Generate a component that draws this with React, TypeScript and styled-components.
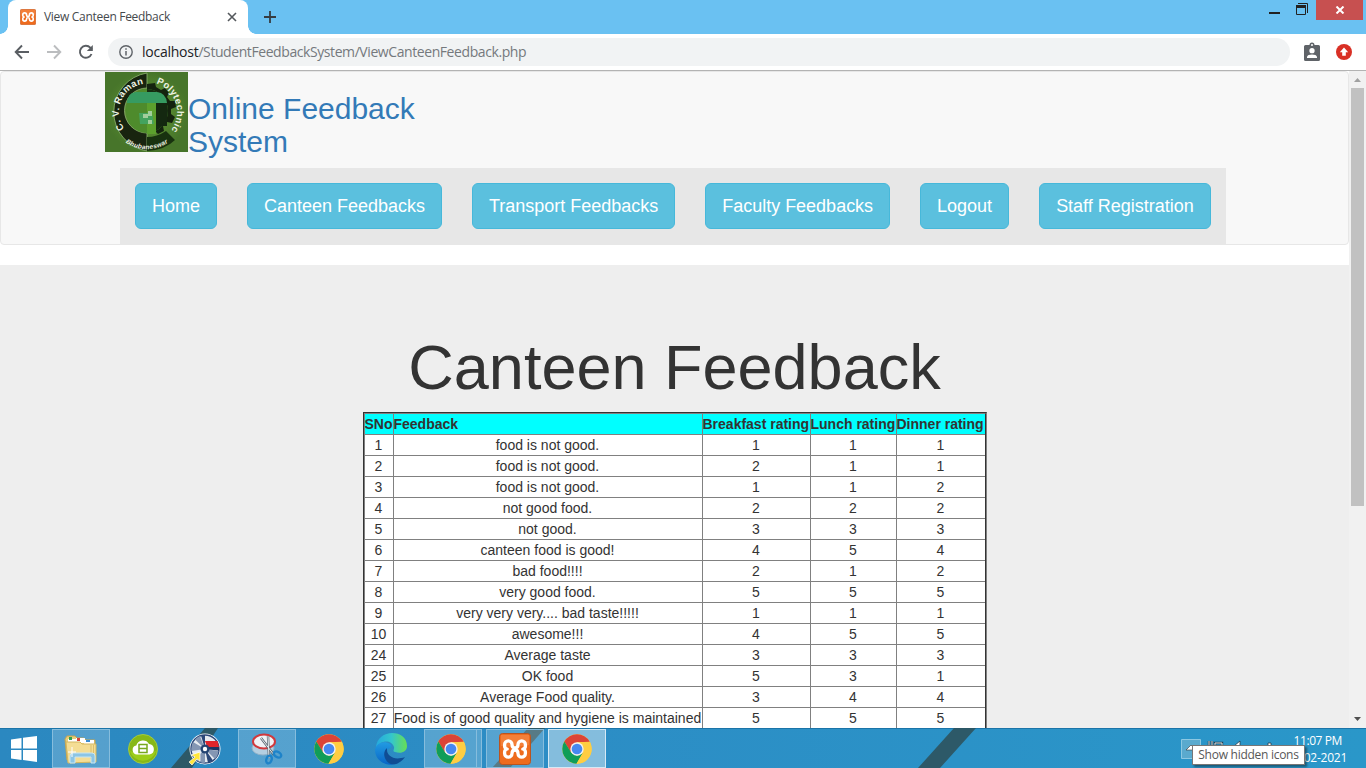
import React from "react";
import styled, { createGlobalStyle } from "styled-components";

const GlobalStyle = createGlobalStyle`
  *, *::before, *::after { box-sizing: border-box; }
  html, body, #root { margin: 0; padding: 0; height: 100%; }
  body { overflow: hidden; background: #fff; color: #333;
    font-family: "Liberation Sans", Arial, sans-serif; font-size: 14px; line-height: 20px; }
  svg { display: block; flex: none; }
`;

const ui = `"Open Sans", "Noto Sans", sans-serif`;

const Desktop = styled.div`
  width: 1366px;
  height: 768px;
  display: flex;
  flex-direction: column;
  overflow: hidden;
`;

/* browser frame */
const TabStrip = styled.header`
  height: 34px;
  flex: none;
  display: flex;
  align-items: flex-end;
  justify-content: space-between;
  background: #6ac1f2;
`;
const TabGroup = styled.div`
  display: flex;
  align-items: flex-end;
  height: 34px;
`;
const TabCurve = styled.div<{ $side: "left" | "right" }>`
  width: 8px;
  height: 8px;
  background: radial-gradient(circle at ${(p) => (p.$side === "left" ? "0 0" : "100% 0")}, transparent 7.5px, #fff 8px);
`;
const Tab = styled.div`
  width: 240px;
  height: 34px;
  padding: 0 10px 0 12px;
  display: flex;
  align-items: center;
  gap: 8px;
  background: #fff;
  border-radius: 8px 8px 0 0;
`;
const TabTitle = styled.span`
  flex: 1;
  font: 12px/16px ${ui};
  letter-spacing: -0.3px;
  color: #45494d;
  white-space: nowrap;
`;
const NewTab = styled.div`
  height: 34px;
  padding-left: 8px;
  display: flex;
  align-items: center;
`;
const WindowButtons = styled.div`
  display: flex;
  align-self: flex-start;
  height: 20px;
`;
const CloseButton = styled.div`
  width: 47px;
  height: 20px;
  margin-right: 3px;
  display: flex;
  align-items: center;
  justify-content: center;
  background: #c75050;
`;
const Toolbar = styled.div`
  height: 37px;
  flex: none;
  display: flex;
  align-items: center;
  padding: 0 14px;
  background: #fff;
  border-bottom: 1px solid #b3b3b3;
`;
const NavIcons = styled.div`
  width: 94px;
  display: flex;
  gap: 16px;
`;
const AddressBar = styled.div`
  width: 1182px;
  height: 28px;
  padding-left: 11px;
  display: flex;
  align-items: center;
  gap: 9px;
  border-radius: 14px;
  background: #f1f3f4;
`;
const Address = styled.span`
  font: 14px/20px ${ui};
  letter-spacing: -0.42px;
  color: #75797d;
  white-space: nowrap;
  b { font-weight: 400; letter-spacing: -0.25px; color: #202124; }
`;
const ToolbarActions = styled.div`
  margin-left: 14px;
  display: flex;
  align-items: center;
  gap: 16px;
`;

/* page */
const Viewport = styled.div`
  flex: 1;
  min-height: 0;
  display: flex;
  background: #fff;
`;
const Page = styled.main`
  width: 1349px;
  height: 100%;
  overflow: hidden;
`;
const Navbar = styled.nav`
  height: 174px;
  margin-bottom: 20px;
  padding-left: 104px;
  background: #f8f8f8;
  border: 1px solid #e7e7e7;
  border-radius: 4px;
`;
const Brand = styled.div`
  display: flex;
  height: 96px;
  color: #337ab7;
`;
const BrandName = styled.h2`
  width: 270px;
  margin: 20px 0 0;
  font-size: 30px;
  font-weight: 400;
  line-height: 33px;
`;
const Menu = styled.div`
  display: flex;
  gap: 30px;
  width: 1106px;
  height: 76px;
  margin-left: 15px;
  padding: 15px;
  background: #e7e7e7;
`;
const MenuButton = styled.button`
  height: 46px;
  padding: 0 16px;
  border: 1px solid #46b8da;
  border-radius: 6px;
  background: #5bc0de;
  color: #fff;
  font: 18px/24px "Liberation Sans", Arial, sans-serif;
  letter-spacing: -0.009px;
  white-space: nowrap;
`;
const Jumbotron = styled.section`
  padding-top: 68px;
  height: 600px;
  background: #eee;
  display: flex;
  flex-direction: column;
  align-items: center;
`;
const Title = styled.h1`
  margin: 0 0 10px;
  font-size: 63px;
  font-weight: 400;
  line-height: 69px;
`;
const Table = styled.div`
  width: 624px;
  border: 1px solid #333;
  border-right-color: #808080;
`;
const Row = styled.div<{ $head?: boolean }>`
  display: grid;
  grid-template-columns: 29px 309px 108px 86px 88px;
  height: 21px;
  border-left: 1px solid #808080;
  border-right: 1px solid #333;
  background: ${(p) => (p.$head ? "#0ff" : "#fff")};
  font-weight: ${(p) => (p.$head ? 700 : 400)};
  text-align: ${(p) => (p.$head ? "left" : "center")};
  &:first-child { height: 22px; border-top: 1px solid #808080; }
`;
const Cell = styled.div`
  border: solid #808080;
  border-width: 0 1px 1px 0;
  white-space: nowrap;
  line-height: 20px;
  &:last-child { border-right: 0; }
`;
const Scrollbar = styled.div`
  width: 17px;
  display: flex;
  flex-direction: column;
  align-items: center;
  background: #f1f1f1;
`;
const ScrollThumb = styled.div`
  width: 13px;
  height: 418px;
  margin-bottom: auto;
  background: #c1c1c1;
`;

/* taskbar */
const Taskbar = styled.footer`
  position: relative;
  height: 40px;
  flex: none;
  display: flex;
  gap: 4px;
  background: linear-gradient(#1b74a8 0 1px, transparent 1px), linear-gradient(90deg, #2b88c0, #2c8dc5 40%, #2a97c9);
`;
const Streaks = styled.svg`
  position: absolute;
  inset: 0;
`;
const Slot = styled.div<{ $state?: "open" | "active"; $w?: number }>`
  position: relative;
  width: ${(p) => p.$w ?? 58}px;
  height: 39px;
  margin-top: 1px;
  display: flex;
  align-items: center;
  justify-content: center;
  border: 1px solid ${(p) => (p.$state === "active" ? "#d5e9f5" : p.$state ? "#86bddd" : "transparent")};
  background: ${(p) => (p.$state === "active" ? "rgba(255,255,255,.42)" : p.$state ? "rgba(255,255,255,.2)" : "none")};
`;
const StackedGroup = styled.div`
  display: flex;
  width: 58px;
`;
const StackEdge = styled.div`
  width: 5px;
  height: 39px;
  margin-top: 1px;
  border: 1px solid #86bddd;
  border-left: 0;
  background: rgba(255, 255, 255, 0.2);
  position: relative;
`;
const Tray = styled.div`
  position: relative;
  margin-left: auto;
  width: 186px;
  display: flex;
`;
const Clock = styled.div`
  width: 60px;
  margin-left: -3px;
  padding-top: 4px;
  display: flex;
  flex-direction: column;
  align-items: flex-end;
  font: 12px/17px ${ui};
  color: #fff;
  white-space: nowrap;
`;
const Time = styled.span`
  margin-right: 5px;
  letter-spacing: -0.4px;
`;
const DateText = styled.span`
  letter-spacing: -0.25px;
`;
const Tooltip = styled.div`
  position: absolute;
  left: 12px;
  top: 17px;
  width: 113px;
  height: 20px;
  border: 1px solid #767676;
  background: #fff;
  box-shadow: 2px 2px 2px rgba(0, 0, 0, 0.4);
  color: #575757;
  font: 12px/18px ${ui};
  letter-spacing: -0.27px;
  text-align: center;
  white-space: nowrap;
`;

const Xampp = ({ size }: { size: number }) => (
  <svg width={size} height={size} viewBox="0 0 32 32">
    <rect x="0.5" y="0.5" width="31" height="31" rx="3" fill="#ee6b1d" stroke="#b85420" />
    <path d="M2 2h28v10Q16 15 2 13z" fill="#f68a46" opacity=".65" />
    <path
      d="M13 11.500a3.700 3.700 0 0 0-7.400 0V13q0 2.500 2.600 3-2.600.5-2.600 3v1.500a3.700 3.700 0 0 0 7.400 0q0-3.500 3-3.500t3 3.500a3.700 3.700 0 0 0 7.400 0V19q0-2.500-2.600-3 2.600-.5 2.600-3v-1.500a3.700 3.700 0 0 0-7.400 0q0 3.500-3 3.500t-3-3.500z"
      fill="none" stroke="#fff" strokeWidth="3.300" strokeLinejoin="round"
    />
  </svg>
);

const Chrome = () => (
  <svg width="30" height="30" viewBox="0 0 30 30">
    <circle cx="15" cy="15" r="14.700" fill="#ffcd42" />
    <path d="M2.300 7.600A14.700 14.700 0 0 1 27.700 7.700L15 8.300 8.800 18.300z" fill="#dc4437" />
    <path d="M2.300 7.600A14.700 14.700 0 0 0 14.500 29.700L21 18.700 15 21.700 9.200 18.400z" fill="#109d58" />
    <path d="M14.500 29.700A14.700 14.700 0 0 0 28 8.300H15l6 10.200z" fill="#ffcd42" />
    <circle cx="15" cy="15" r="6.700" fill="#f1f1f1" />
    <circle cx="15" cy="15" r="5.300" fill="#4688f1" />
  </svg>
);

const Emblem = () => (
  <svg width="83" height="80" viewBox="0 0 83 80">
    <defs>
      <radialGradient id="grass"><stop offset="0" stopColor="#659c35" /><stop offset="1" stopColor="#47752a" /></radialGradient>
      <path id="arcLeft" d="M19.300 56.500A28 28 0 0 1 40.500 12" />
      <path id="arcRight" d="M51.300 11.500A30 30 0 0 1 64 60.500" />
      <path id="arcBottom" d="M20.500 70.500A37 37 0 0 0 65 69" />
    </defs>
    <rect width="83" height="80" fill="url(#grass)" />
    <path d="M42 1A39.500 39.500 0 0 0 42 79V61A21 21 0 0 1 42 16z" fill="#18240f" stroke="#91b871" strokeWidth=".8" />
    <path d="M42 79Q60 78 70 68L61 59Q52 65 42 65z" fill="#18320f" />
    <path d="M42 12l8-1 1 4 5 3 4-2 4 5-2 4 3 4 5 0 1 6-5 2v5l4 3-3 6-5-1-4 4 1 5-6 3-4-4-7 1z" fill="#14230e" />
    <ellipse cx="42" cy="39" rx="21" ry="22" fill="#4e8b2c" />
    <path d="M42 17A21 22 0 0 1 42 61z" fill="#152b10" />
    <path d="M22 31Q22 21 31 20H52Q61 21 62 31z" fill="#369b61" />
    <path d="M42 31H62V54H52V43H42z" fill="#142810" />
    <path d="M42 31h9v31h-9z" fill="#5ca02d" />
    <path d="M34 41h13l2 11H35z" fill="#43a35e" />
    <path d="M38 42h5v4h-5zM43 39h4v5h-4zM43 48h4v4h-4z" fill="#a2ce9c" />
    <g fill="#edf3e3" fontFamily="Liberation Sans, Arial, sans-serif" fontWeight="700">
      <text fontSize="9.500"><textPath href="#arcLeft" textLength="58">C. V. Raman</textPath></text>
      <text fontSize="9.500"><textPath href="#arcRight" textLength="57">Polytechnic</textPath></text>
      <text fontSize="6.500" fontStyle="italic"><textPath href="#arcBottom" textLength="45">Bhubaneswar</textPath></text>
    </g>
  </svg>
);

const Explorer = () => (
  <svg width="34" height="30" viewBox="0 0 34 30">
    <path d="M1 5l2-3h8l2 2h7l2 2h9v20H3z" fill="#e9cf7b" stroke="#c5a44f" />
    <path d="M4 5h11l1 3h-12z" fill="#fff" /><path d="M5 3h3v3H5z" fill="#30a153" />
    <path d="M12 4h9v5h-9z" fill="#fff" /><path d="M13 4h3v3h-3z" fill="#d84437" />
    <path d="M20 6h10v4H20z" fill="#fff" /><path d="M22 6h4v2h-4z" fill="#3b8dd2" />
    <path d="M2 8h14l2 2h14v18l-28 1z" fill="#f4dd94" stroke="#d4b75f" />
    <path d="M27 11v14M29.500 11v14" stroke="#dcc06c" />
    <path d="M6 29v-7q0-3 3-3h19q3 0 3 3v7h-4v-6H11v6z" fill="#8cc5e4" stroke="#c7e6f3" />
    <path d="M8 13v10M4 18h8" stroke="#fff" strokeWidth="1" />
  </svg>
);
const CloudBook = () => (
  <svg width="30" height="30" viewBox="0 0 30 30">
    <circle cx="15" cy="15" r="14.500" fill="#87b818" stroke="#a2cc42" />
    <path d="M2 17Q15 23 28 17A13.500 13.500 0 0 1 2 17" fill="#9ccd18" />
    <path d="M9 20.500a4.600 4.600 0 0 1-.7-9.100A7 7 0 0 1 21 10a5.300 5.300 0 0 1 .5 10.500z" fill="#fff" />
    <path d="M11 10.500h8v8h-8zM11 14.500h8" fill="none" stroke="#78a81d" strokeWidth="1.500" />
  </svg>
);
const Disc = () => (
  <svg width="34" height="34" viewBox="0 0 34 34">
    <circle cx="17" cy="17" r="15.500" fill="#fff" />
    <circle cx="17" cy="17" r="14" fill="#e6eaf0" stroke="#2b4778" strokeWidth="1.400" />
    <path d="M17 17L7 7.500Q9 5 12 4zM17 17L30.500 19Q30 24 27 27zM17 17L17 31Q11 31 7 27zM17 17L3.500 19Q3 14 5 10z" fill="#8496b3" />
    <path d="M17 17L20 31 25 28.500zM17 17L13 3.500 17 3z" fill="#2b4778" />
    <path d="M17 9h12.500l1.500 6H19z" fill="#e0252b" />
    <path d="M20 15h11v3.500l-11-1z" fill="#1c3563" />
    <circle cx="17" cy="17" r="4.500" fill="#244372" /><circle cx="17" cy="17" r="2.200" fill="#fff" />
    <path d="M12 20l0 9-3-2-5 6-3-3 6-5-4-2z" fill="#ffe53b" stroke="#fff" strokeWidth=".7" />
  </svg>
);
const Snip = () => (
  <svg width="32" height="32" viewBox="0 0 32 32">
    <ellipse cx="12" cy="15" rx="11" ry="7" fill="#b4cfe1" stroke="#93b3c9" />
    <ellipse cx="13" cy="8.500" rx="11" ry="7" fill="#f0f2f5" stroke="#d1393d" strokeWidth="2" />
    <path d="M10 5l13 17M17 3l1 22" stroke="#5d6a74" strokeWidth="2.400" />
    <path d="M10 5l13 17M17 3l1 22" stroke="#e4e9ec" strokeWidth="1" />
    <g fill="none" stroke="#1e83c9" strokeWidth="2.400"><ellipse cx="18" cy="26.500" rx="2.600" ry="4" transform="rotate(20 18 26.500)" /><ellipse cx="26.500" cy="21.500" rx="4" ry="2.600" transform="rotate(30 26.500 21.500)" /></g>
  </svg>
);
const Edge = () => (
  <svg width="32" height="32" viewBox="0 0 32 32">
    <defs>
      <linearGradient id="eg"><stop offset="0" stopColor="#25a9de" /><stop offset=".5" stopColor="#34c6cc" /><stop offset="1" stopColor="#68df53" /></linearGradient>
      <linearGradient id="eb" x2="0" y2="1"><stop stopColor="#229be2" /><stop offset="1" stopColor="#0865c6" /></linearGradient>
    </defs>
    <path d="M1 15C2-5 32-4 32 13c0 6-6 8-12 6-3-1-.5-2-1-5C17 7 6 6 1 15" fill="url(#eg)" />
    <path d="M0 17c1-7 9-10 15-6 3 2 1 4-2 5-4 7 3 14 10 14C12 35 0 28 0 17" fill="url(#eb)" />
    <path d="M12 15c-1 8 7 13 18 9C25 32 15 34 11 27c-3-5-2-9 1-12" fill="#104d94" />
  </svg>
);

const menu = ["Home", "Canteen Feedbacks", "Transport Feedbacks", "Faculty Feedbacks", "Logout", "Staff Registration"];
const head = ["SNo", "Feedback", "Breakfast rating", "Lunch rating", "Dinner rating"];
const rows: (string | number)[][] = [
  [1, "food is not good.", 1, 1, 1],
  [2, "food is not good.", 2, 1, 1],
  [3, "food is not good.", 1, 1, 2],
  [4, "not good food.", 2, 2, 2],
  [5, "not good.", 3, 3, 3],
  [6, "canteen food is good!", 4, 5, 4],
  [7, "bad food!!!!", 2, 1, 2],
  [8, "very good food.", 5, 5, 5],
  [9, "very very very.... bad taste!!!!!", 1, 1, 1],
  [10, "awesome!!!", 4, 5, 5],
  [24, "Average taste", 3, 3, 3],
  [25, "OK food", 5, 3, 1],
  [26, "Average Food quality.", 3, 4, 4],
  [27, "Food is of good quality and hygiene is maintained", 5, 5, 5],
];

export default function App() {
  return (
    <Desktop>
      <GlobalStyle />
      <TabStrip>
        <TabGroup>
          <TabCurve $side="left" />
          <Tab>
            <Xampp size={16} />
            <TabTitle>View Canteen Feedback</TabTitle>
            <svg width="12" height="12" viewBox="0 0 12 12"><path d="M2 2l8 8M10 2l-8 8" stroke="#54585c" strokeWidth="1.600" /></svg>
          </Tab>
          <TabCurve $side="right" />
          <NewTab>
            <svg width="12" height="12" viewBox="0 0 12 12"><path d="M6 0v12M0 6h12" stroke="#363c41" strokeWidth="1.800" /></svg>
          </NewTab>
        </TabGroup>
        <WindowButtons>
          <svg width="47" height="20" viewBox="0 0 47 20">
            <path d="M0 12h11v2H0z" fill="#222" />
            <path d="M27.500 6.500h9v8h-9z" fill="none" stroke="#222" />
            <path d="M27 5h10v3H27z" fill="#222" />
            <path d="M29 3.500h9.500V13" fill="none" stroke="#222" />
          </svg>
          <CloseButton>
            <svg width="10" height="8" viewBox="0 0 10 8"><path d="M1.500.5l7 7M8.500.5l-7 7" stroke="#fff" strokeWidth="2" /></svg>
          </CloseButton>
        </WindowButtons>
      </TabStrip>
      <Toolbar>
        <NavIcons>
          <svg width="16" height="16" viewBox="0 0 16 16"><path d="M15 8H2M8 1.500L1.700 8 8 14.500" fill="none" stroke="#5a5e63" strokeWidth="1.900" /></svg>
          <svg width="16" height="16" viewBox="0 0 16 16"><path d="M1 8h13M8 1.500L14.300 8 8 14.500" fill="none" stroke="#bbbdbf" strokeWidth="1.900" /></svg>
          <svg width="16" height="16" viewBox="0 0 16 16"><path d="M13.500 10A6 6 0 1 1 12.300 3.700L14 5.500" fill="none" stroke="#5a5e63" strokeWidth="1.900" /><path d="M14.800 1v6h-6z" fill="#5a5e63" /></svg>
        </NavIcons>
        <AddressBar>
          <svg width="14" height="14" viewBox="0 0 14 14"><circle cx="7" cy="7" r="6.200" fill="none" stroke="#5f6368" strokeWidth="1.400" /><path d="M7 6v4.500M7 3.300v1.500" stroke="#5f6368" strokeWidth="1.500" /></svg>
          <Address><b>localhost</b>/StudentFeedbackSystem/ViewCanteenFeedback.php</Address>
        </AddressBar>
        <ToolbarActions>
          <svg width="16" height="20" viewBox="0 0 16 20"><path fillRule="evenodd" d="M1.500 3H5.500a2.500 2.500 0 0 1 5 0h4A1.500 1.500 0 0 1 16 4.500v13a1.500 1.500 0 0 1-1.500 1.500h-13A1.500 1.500 0 0 1 0 17.500v-13A1.500 1.500 0 0 1 1.500 3M8 2a1 1 0 1 0 0 2 1 1 0 0 0 0-2M8 6a2.600 2.600 0 1 0 0 5.300A2.600 2.600 0 0 0 8 6M3 16h10v-1c0-3.300-10-3.300-10 0z" fill="#5f6368" /></svg>
          <svg width="16" height="16" viewBox="0 0 16 16"><circle cx="8" cy="8" r="8" fill="#d93025" /><path d="M8 3.500L12.200 8.300H9.800v3.500H6.200V8.300H3.800z" fill="#fff" /></svg>
        </ToolbarActions>
      </Toolbar>
      <Viewport>
        <Page>
          <Navbar>
            <Brand>
              <Emblem />
              <BrandName>Online Feedback System</BrandName>
            </Brand>
            <Menu>{menu.map((m) => <MenuButton key={m}>{m}</MenuButton>)}</Menu>
          </Navbar>
          <Jumbotron>
            <Title>Canteen Feedback</Title>
            <Table>
              <Row $head>{head.map((h) => <Cell key={h}>{h}</Cell>)}</Row>
              {rows.map((r) => <Row key={r[0]}>{r.map((c, i) => <Cell key={i}>{c}</Cell>)}</Row>)}
            </Table>
          </Jumbotron>
        </Page>
        <Scrollbar>
          <svg width="17" height="17" viewBox="0 0 17 17"><path d="M5 11l3.500-4L12 11z" fill="#a0a0a0" /></svg>
          <ScrollThumb />
          <svg width="17" height="17" viewBox="0 0 17 17"><path d="M5 6h7l-3.500 4z" fill="#505050" /></svg>
        </Scrollbar>
      </Viewport>
      <Taskbar>
        <Streaks width="1366" height="40" viewBox="0 0 1366 40">
          <path d="M171 40h21L218 0h-13zM492 40h18L545 0h-17zM918 40h22L976 0h-22z" fill="#2d535d" opacity=".9" />
        </Streaks>
        <Slot $w={48}>
          <svg width="26" height="26" viewBox="0 0 26 26"><path d="M0 3.500L10.500 2v10.500H0zM12 1.800L26 0v12.500H12zM0 14h10.500v10L0 22.500zM12 14h14v12l-14-2z" fill="#fff" /></svg>
        </Slot>
        <Slot $state="open"><Explorer /></Slot>
        <Slot><CloudBook /></Slot>
        <Slot><Disc /></Slot>
        <Slot $state="open"><Snip /></Slot>
        <Slot><Chrome /></Slot>
        <Slot><Edge /></Slot>
        <StackedGroup>
          <Slot $state="open" $w={53}><Chrome /></Slot>
          <StackEdge />
        </StackedGroup>
        <Slot $state="open"><Xampp size={32} /></Slot>
        <Slot $state="active"><Chrome /></Slot>
        <Tray>
          <svg width="110" height="40" viewBox="0 0 110 40">
            <path d="M1.500 11.500h19v19h-19z" fill="#5aaace" stroke="#8cc8e2" />
            <path d="M6 22l5-5 5 5z" fill="#fff" stroke="#333" strokeWidth=".6" />
            <path d="M29 13v6M32 13v6M35 18v-3h7v3" fill="none" stroke="#253e4d" strokeWidth="2.400" />
            <path d="M29 13v6M32 13v6M35 18v-3h7v3" fill="none" stroke="#d9e4ea" strokeWidth="1" />
            <path d="M54 18l6-5v5zM88 15h3v3h-3z" fill="#fff" stroke="#253e4d" strokeWidth=".8" />
          </svg>
          <Clock>
            <Time>11:07 PM</Time>
            <DateText>-02-2021</DateText>
          </Clock>
          <Tooltip>Show hidden icons</Tooltip>
        </Tray>
      </Taskbar>
    </Desktop>
  );
}
